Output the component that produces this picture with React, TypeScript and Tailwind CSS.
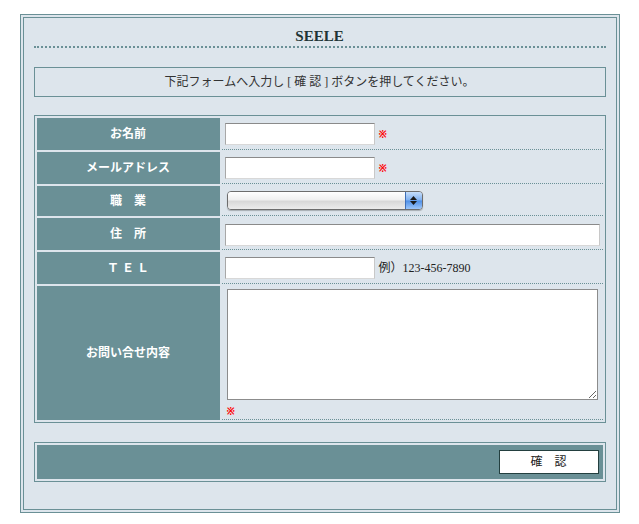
import React from "react";

const serif = "font-['Liberation_Serif','Noto_Sans_CJK_JP',serif]";

function Req() {
  return <span className="ml-[4px] text-[10px] font-bold leading-none text-[#ff0000]">※</span>;
}

function TextInput({ w = "w-[150px]" }: { w?: string }) {
  return (
    <input
      type="text"
      className={`${w} h-[22px] border border-t-[#8a8a8a] border-l-[#a8a8a8] border-r-[#c8c8c8] border-b-[#d8d8d8] bg-white px-1 text-[12px] outline-none`}
    />
  );
}

function FakeSelect() {
  return (
    <div className="ml-[2px] flex h-[19px] w-[196px] overflow-hidden rounded-[4px] border border-[#6d6d6d] shadow-[0_1px_1px_rgba(0,0,0,0.25)]">
      <div className="flex-1 bg-[linear-gradient(#ffffff,#f0f0f0_45%,#d8d8d8_55%,#ececec)]" />
      <div className="flex w-[17px] flex-col items-center justify-center gap-[1px] border-l border-[#3e6fb8] bg-[linear-gradient(#c6defa,#7fb0f0_48%,#4f8fe6_52%,#9cc6fb)]">
        <svg width="7" height="4" viewBox="0 0 7 4">
          <path d="M3.5 0L7 4H0z" fill="#1a1a1a" />
        </svg>
        <svg width="7" height="4" viewBox="0 0 7 4">
          <path d="M0 0h7L3.5 4z" fill="#1a1a1a" />
        </svg>
      </div>
    </div>
  );
}

const rows: { label: string; h: string; content: React.ReactNode }[] = [
  {
    label: "お名前",
    h: "h-[32px]",
    content: (
      <div className="flex items-center">
        <TextInput />
        <Req />
      </div>
    ),
  },
  {
    label: "メールアドレス",
    h: "h-[32px]",
    content: (
      <div className="flex items-center">
        <TextInput />
        <Req />
      </div>
    ),
  },
  { label: "職　業", h: "h-[30px]", content: <FakeSelect /> },
  { label: "住　所", h: "h-[32px]", content: <TextInput w="w-[375px]" /> },
  {
    label: "Ｔ Ｅ Ｌ",
    h: "h-[32px]",
    content: (
      <div className="flex items-center">
        <TextInput />
        <span className={`ml-[4px] text-[12px] text-[#222] ${serif}`}>例）123-456-7890</span>
      </div>
    ),
  },
];

export default function App() {
  return (
    <div className="min-h-[524px] bg-white pt-[14px]">
      <div className="mx-auto w-[600px] border border-[#6a9096] bg-[#dde5ec] p-[2px]">
        <div className="border border-[#6a9096] px-[10px] pb-[27px] pt-[10px]">
          <h1
            className={`border-b-2 border-dotted border-[#6a9096] pb-[1px] text-center text-[15px] font-bold leading-[17px] text-[#1f3535] ${serif}`}
          >
            SEELE
          </h1>

          <div
            className={`mt-[19px] flex h-[30px] items-center justify-center border border-[#6a9096] text-[12px] text-[#333] ${serif}`}
          >
            下記フォームへ入力し [ 確 認 ] ボタンを押してください。
          </div>

          <table className="mt-[18px] w-full border-separate border-spacing-[2px] border border-[#6a9096]">
            <tbody>
              {rows.map((r) => (
                <tr key={r.label} className={r.h}>
                  <th
                    className={`w-[183px] bg-[#6a9096] text-center text-[12px] font-bold text-white ${serif}`}
                  >
                    {r.label}
                  </th>
                  <td className="border-b border-dotted border-[#6a9096] pl-[3px] align-middle">
                    {r.content}
                  </td>
                </tr>
              ))}
              <tr className="h-[134px]">
                <th
                  className={`w-[183px] bg-[#6a9096] text-center text-[12px] font-bold text-white ${serif}`}
                >
                  お問い合せ内容
                </th>
                <td className="border-b border-dotted border-[#6a9096] pl-[5px] pt-[3px] align-top">
                  <textarea className="block h-[111px] w-[371px] resize border border-[#8c8c8c] bg-white text-[12px] outline-none" />
                  <div className="mt-[2px] h-[14px] leading-[14px]">
                    <span className="text-[10px] font-bold text-[#ff0000]">※</span>
                  </div>
                </td>
              </tr>
            </tbody>
          </table>

          <div className="mt-[19px] border border-[#6a9096] p-[2px]">
            <div className="flex h-[34px] items-center justify-end bg-[#6a9096] pr-[4px]">
              <button
                type="button"
                className={`h-[24px] w-[100px] border border-[#233f3f] bg-white text-[12px] text-[#222] ${serif}`}
              >
                確　認
              </button>
            </div>
          </div>
        </div>
      </div>
    </div>
  );
}
